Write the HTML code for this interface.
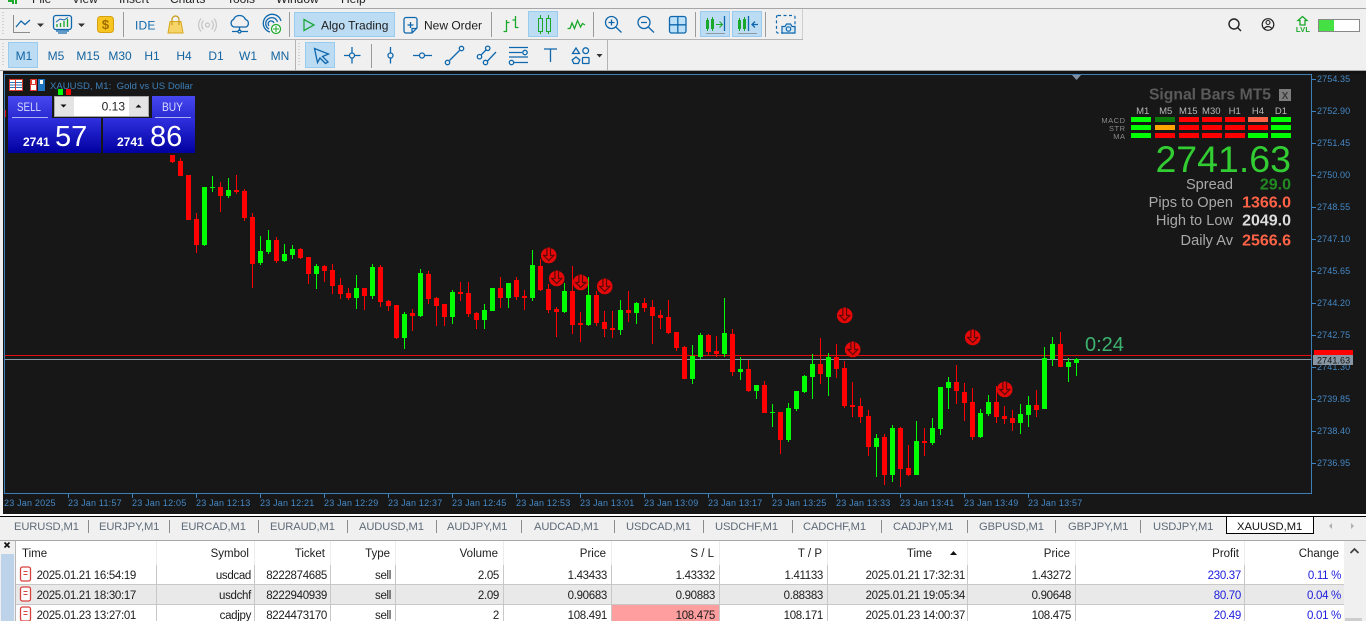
<!DOCTYPE html>
<html lang="en"><head><meta charset="utf-8"><title>MT5 XAUUSD</title>
<style>
html,body{margin:0;padding:0;width:1366px;height:621px;overflow:hidden;background:#f0f0f0}
svg{display:block;position:absolute;left:0;top:0;font-family:"Liberation Sans",sans-serif}
.c{shape-rendering:crispEdges}
.ax{font-size:9px;fill:#4488c6;letter-spacing:.1px}
.tm{font-size:9px;fill:#4488c6;letter-spacing:.2px}
.tb{font-size:12px;fill:#1464a0;text-anchor:middle}
.tab{font-size:11.2px;fill:#5f6b78;letter-spacing:-.12px}
.t{font-size:11.5px;fill:#1c1c1c;text-anchor:end;letter-spacing:-.32px}
.h{font-size:11.5px;fill:#1c1c1c;text-anchor:end}
.b{font-size:11.5px;fill:#1c1cdc;text-anchor:end;letter-spacing:-.3px}
.i{fill:none;stroke:#0f68ad;stroke-width:1.3}
.g{fill:none;stroke:#1aa82a;stroke-width:1.3}
.lb{font-size:14.6px;fill:#a9a9a9;text-anchor:end}
.v{font-size:16px;font-weight:bold;text-anchor:end}
</style></head><body>
<svg width="1366" height="621" viewBox="0 0 1366 621" xmlns="http://www.w3.org/2000/svg">
<defs>
<g id="mk"><circle r="7.8" fill="#e40808"/><path d="M-1.8-8V0H-5L0 5 5 0H1.8V-8" fill="none" stroke="#5a0808" stroke-width="1.2"/><path d="M-1-8V.8H-3L0 3.6 3 .8H1V-8Z" fill="#e40808"/></g>
<g id="ri"><rect x="20.5" y="-7.5" width="10" height="14" rx="2" fill="#fff" stroke="#d8403c" stroke-width="1.3"/><path d="M23.500 -3H27.500M23.500 0H27.500" stroke="#d8403c"/></g>
</defs>
<!-- chrome -->
<rect width="1366" height="621" fill="#f0f0f0"/>
<g font-size="12" fill="#222"><text x="32" y="3">File</text><text x="72" y="3">View</text><text x="119" y="3">Insert</text><text x="170" y="3">Charts</text><text x="227" y="3">Tools</text><text x="276" y="3">Window</text><text x="341" y="3">Help</text></g>
<path d="M8 0V2H12V4H14V0ZM15 0V4H17V0Z" fill="#1faa2e"/>
<g class="c">
<rect y="8" width="1366" height="1" fill="#a6a6a6"/>
<rect y="39" width="803" height="1" fill="#b4b4b4"/><rect x="802" y="9" width="1" height="30" fill="#cfcfcf"/>
<rect x="607" y="40" width="1" height="30" fill="#b4b4b4"/>
<rect y="70" width="1366" height="1" fill="#a8a8a8"/>
<rect x="123" y="12" width="1" height="25" fill="#9a9a9a"/><rect x="289" y="12" width="1" height="25" fill="#9a9a9a"/><rect x="491" y="12" width="1" height="25" fill="#9a9a9a"/><rect x="593" y="12" width="1" height="25" fill="#9a9a9a"/><rect x="695" y="12" width="1" height="25" fill="#9a9a9a"/><rect x="765" y="12" width="1" height="25" fill="#9a9a9a"/>
<rect x="295" y="40" width="1" height="30" fill="#b4b4b4"/><rect x="371" y="44" width="1" height="24" fill="#9a9a9a"/>
<path d="M3 12v1M3 15v1M3 18v1M3 21v1M3 24v1M3 27v1M3 30v1M3 33v1M3 43v1M3 46v1M3 49v1M3 52v1M3 55v1M3 58v1M3 61v1M3 64v1M299 43v1M299 46v1M299 49v1M299 52v1M299 55v1M299 58v1M299 61v1M299 64v1" stroke="#b5b5b5"/>
<!-- active buttons -->
<rect x="294.5" y="12.5" width="100" height="24" fill="#bcdcf4" stroke="#98cbee"/>
<rect x="528.5" y="11.5" width="29" height="25" fill="#bcdcf4" stroke="#98cbee"/>
<rect x="700.5" y="11.5" width="29" height="25" fill="#bcdcf4" stroke="#98cbee"/>
<rect x="732.5" y="11.5" width="29" height="25" fill="#bcdcf4" stroke="#98cbee"/>
<rect x="8.5" y="42.5" width="29" height="25" fill="#bcdcf4" stroke="#98cbee"/>
<rect x="305.5" y="42.5" width="29" height="25" fill="#bcdcf4" stroke="#98cbee"/>
</g>
<!-- toolbar 1 icons -->
<path d="M13.5 15V32.5H30" fill="none" stroke="#8c8c8c"/><path d="M16 27L21 21L25 24.5L30 20" class="i"/>
<path d="M37 23.5H44L40.500 27Z" fill="#333"/>
<rect x="53.500" y="15.500" width="18" height="14" rx="2.500" class="i"/><path d="M56 31H69M58 33H67" class="i"/><path d="M57 27v-3M60.500 27v-4M64 27v-6M67.500 27v-8" class="g"/><path d="M56 22L60 19L64 20L68 17.500" class="i" style="stroke-width:1"/>
<path d="M78 23.500H85L81.500 27Z" fill="#333"/>
<rect x="97.500" y="16.500" width="16" height="16" rx="3" fill="#f6c520" stroke="#d6a010"/><text x="105.500" y="29" text-anchor="middle" font-size="13" font-weight="bold" fill="#a06c00">$</text>
<text x="135" y="29.500" font-size="12" fill="#0f68ad" letter-spacing=".2">IDE</text>
<path d="M170 21.500H181L183 33H168Z" fill="#f6d468" stroke="#d8a820"/><path d="M172 25V19.500A3.500 3.500 0 0 1 179 19.500V25" fill="none" stroke="#c89a18" stroke-width="1.2"/>
<g fill="none" stroke="#c4c4c4" stroke-width="1.2"><circle cx="207.500" cy="25" r="2"/><path d="M203.500 20.500A6.500 6.500 0 0 0 203.500 29.500M211.500 20.500A6.500 6.500 0 0 1 211.500 29.500M201 18.500A10 10 0 0 0 201 31.500M214 18.500A10 10 0 0 1 214 31.500"/></g>
<path d="M236 27H234A4 4 0 0 1 233.500 19.500A6.500 6.500 0 0 1 245.500 19.500A4 4 0 0 1 246 27Z M239.500 27V31 M232 31.500H237.500M241.500 31.500H248" class="i"/><circle cx="239.500" cy="31.500" r="1.500" class="i"/>
<g class="i"><path d="M270 32A9 9 0 1 1 281 21" /><path d="M269 29A6 6 0 1 1 277.500 22"/><path d="M269 26A3 3 0 1 1 274 23"/></g>
<circle cx="276" cy="29" r="4.500" fill="#fff" stroke="#1aa82a" stroke-width="1.2"/><path d="M273 29H279M276 26V32" stroke="#1aa82a"/>
<path d="M304 19.500L314 25L304 30.500Z" fill="none" stroke="#1fa83c" stroke-width="1.3"/>
<text x="321" y="29.500" font-size="12" fill="#1c1c1c">Algo Trading</text>
<path d="M406 17.500H415A2 2 0 0 1 417 19.500V28L412 33H406A2 2 0 0 1 404 31V19.500A2 2 0 0 1 406 17.500ZM407.500 25H413.500M410.500 22V28M412 33V28.500H417" class="i"/>
<text x="424" y="29.500" font-size="12" fill="#1c1c1c">New Order</text>
<g class="g"><path d="M506.500 20V32M503.500 31.500H506.500M506.500 22.500H509.500M515.500 16V28M512.500 20H515.500M515.500 27.500H518.500"/></g>
<g class="g c" style="stroke-width:1"><rect x="538.500" y="18.500" width="4" height="13"/><path d="M540.500 15V18M540.500 32V34"/><rect x="546.500" y="18.500" width="4" height="13"/><path d="M548.500 15V18M548.500 32V34"/></g>
<path d="M567.500 28.500H570L572 23L574.500 28.500L577.500 20.500L580.500 27L582.500 23.500L585 25" class="g"/>
<g class="i"><circle cx="611.500" cy="22.500" r="6"/><path d="M615.800 27L621.500 32.500M608.500 22.500H614.500M611.500 19.500V25.500"/><circle cx="644" cy="22.500" r="6"/><path d="M648.300 27L654 32.500M641 22.500H647"/></g>
<rect x="669.500" y="16.500" width="16.500" height="16.500" rx="2" fill="#bbe0f7" stroke="#0f68ad" stroke-width="1.3"/><path d="M677.800 16.500V33M669.500 24.800H686" stroke="#0f68ad" stroke-width="1.3"/>
<g class="g c" style="stroke-width:1"><rect x="706.500" y="20.500" width="2" height="8"/><rect x="711.500" y="19.500" width="2" height="9"/><path d="M707.500 18V31M712.500 17V31M716 24.500H722"/></g><path d="M719.500 21.500L722.500 24.500 719.500 27.500" class="g" style="stroke-width:1"/><path d="M724.500 16V31" class="i"/><path d="M706 33.500H725" stroke="#8f9aa3"/>
<g class="g c" style="stroke-width:1"><rect x="738.500" y="20.500" width="2" height="8"/><rect x="743.500" y="19.500" width="2" height="9"/><path d="M739.500 18V31M744.500 17V31"/></g><path d="M748.500 16V31M758 24.500H752M755 21.500L752 24.500 755 27.500" class="i"/><path d="M738 33.500H757" stroke="#8f9aa3"/>
<rect x="776.500" y="15.500" width="18.500" height="17.500" rx="1.500" fill="none" stroke="#0f68ad" stroke-width="1.2" stroke-dasharray="3 2.500"/>
<path d="M782 33V26.500H785L786.500 24H790.500L792 26.500H795V33Z" fill="#d4e7f5" stroke="#0f68ad" stroke-width="1.2"/><circle cx="788.500" cy="29" r="2.200" fill="none" stroke="#0f68ad" stroke-width="1.2"/>
<!-- right side -->
<g fill="none" stroke="#222" stroke-width="1.400"><circle cx="1234" cy="24" r="5"/><path d="M1237.500 27.500L1241 31"/><circle cx="1268" cy="24.500" r="5.800" stroke-width="1.200"/><circle cx="1268" cy="22.500" r="2" stroke-width="1.100"/><path d="M1264 28.500Q1268 24.500 1272 28.500" stroke-width="1.100"/></g>
<path d="M1302.500 16.500L1307 20.500H1305V25H1300V20.500H1298Z" fill="none" stroke="#1aa82a" stroke-width="1.300"/>
<text x="1303" y="32" text-anchor="middle" font-size="7.500" font-weight="bold" fill="#1aa82a" letter-spacing=".2">LVL</text>
<g class="c"><rect x="1318.500" y="19.500" width="41" height="12" fill="#fff" stroke="#888"/><rect x="1319" y="20" width="15" height="11" fill="#44e044"/></g>
<!-- toolbar 2 -->
<text class="tb" x="24" y="60">M1</text><text class="tb" x="56" y="60">M5</text><text class="tb" x="88" y="60">M15</text><text class="tb" x="120" y="60">M30</text><text class="tb" x="152" y="60">H1</text><text class="tb" x="184" y="60">H4</text><text class="tb" x="216" y="60">D1</text><text class="tb" x="248" y="60">W1</text><text class="tb" x="280" y="60">MN</text>
<path d="M314.500 48.500L328.500 54L322.500 56.500L328 62L325.500 63.500L320 58L317.500 62.500Z" class="i"/>
<g class="i"><path d="M344 55.500H349.500M354.500 55.500H360.500M352 47V53M352 58V63.500"/><circle cx="352" cy="55.500" r="2.500"/>
<path d="M390.500 47V53M390.500 58V63.500"/><circle cx="390.500" cy="55.500" r="2.500"/>
<path d="M413 55.500H419.500M424.500 55.500H432"/><circle cx="422" cy="55.500" r="2.500"/>
<path d="M449.500 60.500L459.500 50.500"/><circle cx="447.500" cy="62.500" r="2.200"/><circle cx="461.500" cy="48.500" r="2.200"/>
<path d="M481 55L486 50M487.500 61L496 52"/><circle cx="479.500" cy="56.700" r="2.200"/><circle cx="487.700" cy="48.300" r="2.200"/><circle cx="485.500" cy="62.500" r="2.200"/>
<path d="M509 47.500H528M509 52.500H522M509 57H528M514 62.500H528"/><circle cx="525" cy="52.500" r="2.200"/><circle cx="511.500" cy="62.500" r="2.200"/>
<path d="M544 49H557M550.500 49V62"/>
<path d="M576 48L579.500 53.500H572.500Z"/><circle cx="585.700" cy="50.700" r="2.900"/><path d="M576 57L579.800 60L578.300 63.500H573.700L572.200 60Z"/><rect x="582.500" y="57.500" width="6.500" height="6" rx=".8"/></g>
<path d="M596.500 54H602.500L599.500 57.500Z" fill="#333"/>
<!-- chart -->
<rect class="c" x="3" y="71" width="1363" height="443" fill="#171717"/>
<rect class="c" x="3" y="71" width="1363" height="3" fill="#121212"/>
<rect class="c" x="4.500" y="74.500" width="1307" height="419" fill="none" stroke="#3f7fb8"/>
<path d="M1072 75H1081L1076.500 80Z" fill="#8090a0"/>
<path class="c" stroke="#3f83c0" fill="none" d="M1312 79.500h4M1312 111.500h4M1312 143.500h4M1312 175.500h4M1312 207.500h4M1312 239.500h4M1312 271.500h4M1312 303.500h4M1312 335.500h4M1312 367.500h4M1312 399.500h4M1312 431.500h4M1312 463.500h4M68.500 494v4M132.500 494v4M196.500 494v4M260.500 494v4M324.500 494v4M388.500 494v4M452.500 494v4M516.500 494v4M580.500 494v4M644.500 494v4M708.500 494v4M772.500 494v4M836.500 494v4M900.500 494v4M964.500 494v4M1028.500 494v4"/>
<g class="ax"><text x="1317" y="82">2754.35</text><text x="1317" y="114">2752.90</text><text x="1317" y="146">2751.45</text><text x="1317" y="178">2750.00</text><text x="1317" y="210">2748.55</text><text x="1317" y="242">2747.10</text><text x="1317" y="274">2745.65</text><text x="1317" y="306">2744.20</text><text x="1317" y="338">2742.75</text><text x="1317" y="370">2741.30</text><text x="1317" y="402">2739.85</text><text x="1317" y="434">2738.40</text><text x="1317" y="466">2736.95</text></g>
<g class="tm"><text x="4" y="506">23 Jan 2025</text><text x="68" y="506">23 Jan 11:57</text><text x="132" y="506">23 Jan 12:05</text><text x="196" y="506">23 Jan 12:13</text><text x="260" y="506">23 Jan 12:21</text><text x="324" y="506">23 Jan 12:29</text><text x="388" y="506">23 Jan 12:37</text><text x="452" y="506">23 Jan 12:45</text><text x="516" y="506">23 Jan 12:53</text><text x="580" y="506">23 Jan 13:01</text><text x="644" y="506">23 Jan 13:09</text><text x="708" y="506">23 Jan 13:17</text><text x="772" y="506">23 Jan 13:25</text><text x="836" y="506">23 Jan 13:33</text><text x="900" y="506">23 Jan 13:41</text><text x="964" y="506">23 Jan 13:49</text><text x="1028" y="506">23 Jan 13:57</text></g>
<!-- price lines -->
<g class="c"><rect x="5" y="355" width="1306" height="1" fill="#e01010"/><rect x="5" y="359" width="1306" height="1" fill="#8a98a6"/></g>
<!-- candles -->
<g class="c" fill="none">
<path stroke="#f00" stroke-width="1" d="M172.500 155V163M180.500 158V176M188.500 175V220M196.500 213V253M220.500 182V212M236.500 175V194M244.500 189V221M252.500 213V288M276.500 237V263M300.500 248V259M308.500 257V284M324.500 265V282M332.500 264V294M340.500 278V299M348.500 288V300M364.500 288V310M380.500 265V307M388.500 300V311M396.500 305V339M412.500 309V331M428.500 271V304M436.500 297V326M444.500 304V326M460.500 282V301M468.500 282V317M476.500 312V329M500.500 277V308M516.500 277V300M524.500 290V310M540.500 259V291M548.500 284V313M556.500 307V337M572.500 266V334M580.500 312V342M596.500 291V326M604.500 311V337M612.500 311V338M628.500 291V322M644.500 298V312M652.500 300V344M660.500 310V329M668.500 300V334M676.500 332V351M684.500 346V379M708.500 334V355M716.500 336V357M732.500 329V376M748.500 360V392M764.500 381V413M780.500 412V454M820.500 338V384M836.500 344V378M844.500 361V408M852.500 382V417M860.500 398V423M868.500 410V456M884.500 434V485M900.500 427V487M908.500 445V476M924.500 428V456M956.500 365V404M964.500 383V421M972.500 388V440M996.500 386V423M1004.500 406V424M1012.500 410V431M1036.500 390V417M1060.500 332V367"/>
<path stroke="#f00" stroke-width="5" d="M172.500 155V162M180.500 161V176M188.500 175V220M196.500 219V245M220.500 187V196M236.500 190V192M244.500 191V218M252.500 217V264M276.500 240V261M300.500 249V258M308.500 257V274M324.500 266V271M332.500 270V286M340.500 285V294M348.500 293V298M364.500 288V296M380.500 267V302M388.500 301V306M396.500 305V338M412.500 313V316M428.500 274V299M436.500 298V306M444.500 304V317M460.500 292V294M468.500 293V314M476.500 313V320M500.500 288V298M516.500 280V297M524.500 296V298M540.500 266V290M548.500 289V310M556.500 309V312M572.500 291V325M580.500 323V325M596.500 295V323M604.500 322V329M612.500 328V330M628.500 310V313M644.500 303V308M652.500 307V316M660.500 315V318M668.500 317V333M676.500 332V348M684.500 347V379M708.500 335V352M716.500 351V354M732.500 334V372M748.500 369V391M764.500 385V413M780.500 412V440M820.500 364V374M836.500 357V369M844.500 368V406M852.500 405V407M860.500 406V417M868.500 416V447M884.500 437V475M900.500 428V469M908.500 468V475M924.500 441V443M956.500 382V391M964.500 392V403M972.500 402V437M996.500 402V417M1004.500 416V419M1012.500 418V423M1036.500 405V410M1060.500 344V367"/>
<path stroke="#0f0" stroke-width="1" d="M204.500 187V246M212.500 176V192M228.500 178V198M260.500 236V265M268.500 230V254M284.500 244V262M292.500 245V259M316.500 264V289M356.500 275V309M372.500 264V299M404.500 312V349M420.500 269V317M452.500 290V324M484.500 304V329M492.500 288V311M508.500 283V308M532.500 250V301M564.500 283V313M588.500 277V326M620.500 300V335M636.500 302V324M692.500 345V384M700.500 333V359M724.500 298V357M740.500 357V380M756.500 385V399M772.500 404V427M788.500 403V442M796.500 391V411M804.500 375V393M812.500 354V399M828.500 353V396M876.500 434V477M892.500 425V482M916.500 421V475M932.500 418V445M940.500 387V435M948.500 377V409M980.500 409V438M988.500 395V416M1020.500 404V434M1028.500 396V427M1044.500 347V409M1052.500 337V366M1068.500 358V382M1076.500 358V376"/>
<path stroke="#0f0" stroke-width="5" d="M204.500 187V245M212.500 187V188M228.500 190V196M260.500 251V263M268.500 240V252M284.500 254V261M292.500 249V255M316.500 266V274M356.500 288V298M372.500 267V296M404.500 314V338M420.500 273V316M452.500 292V317M484.500 310V320M492.500 288V311M508.500 283V298M532.500 265V298M564.500 291V312M588.500 295V325M620.500 310V330M636.500 303V313M692.500 356V379M700.500 335V357M724.500 333V354M740.500 369V372M756.500 385V391M772.500 412V413M788.500 408V440M796.500 391V409M804.500 376V392M812.500 364V377M828.500 357V377M876.500 438V447M892.500 428V475M916.500 441V475M932.500 428V443M940.500 387V429M948.500 382V388M980.500 413V437M988.500 402V414M1020.500 414V423M1028.500 405V415M1044.500 358V409M1052.500 344V359M1068.500 362V367M1076.500 359V363"/>
<rect x="5" y="110" width="1" height="7" fill="#e00000"/>
<rect x="58" y="89" width="5" height="6" fill="#0f0"/><rect x="66" y="89" width="5" height="6" fill="#f00"/>
</g>
<!-- down markers -->
<use href="#mk" x="548.700" y="255.500"/><use href="#mk" x="556.700" y="278.500"/><use href="#mk" x="580.700" y="282.500"/><use href="#mk" x="604.700" y="286.500"/><use href="#mk" x="844.700" y="315.500"/><use href="#mk" x="852.700" y="349.500"/><use href="#mk" x="972.700" y="337.500"/><use href="#mk" x="1004.700" y="389.500"/>
<!-- price labels -->
<g class="c"><rect x="1314" y="350" width="39" height="6" fill="#f00"/><rect x="1313" y="355" width="40" height="10" fill="#8896a3"/></g>
<text x="1317" y="363.500" font-size="9" fill="#111" letter-spacing=".1">2741.63</text>
<text x="1085" y="351" font-size="20" fill="#3cb371">0:24</text>
<!-- chart title -->
<text x="50" y="89" font-size="9.500" fill="#3d7fb8" letter-spacing=".05" xml:space="preserve">XAUUSD, M1:  Gold vs US Dollar</text>
<g class="c"><rect x="9.500" y="79.500" width="13" height="11" fill="#fff" stroke="#d83a30"/><path d="M10 82.500H22M10 85H22M10 87.500H22" stroke="#2a72b8"/><path d="M15.500 80V90" stroke="#d83a30"/>
<rect x="30" y="79" width="7" height="12" fill="#e03a30"/><rect x="38" y="79" width="7" height="12" fill="#1f74c0"/><rect x="32" y="80" width="3" height="4" fill="#fff"/><rect x="40" y="80" width="3" height="4" fill="#fff"/><rect x="31" y="85" width="5" height="5" fill="#fff"/></g>
<!-- trade panel -->
<defs><linearGradient id="gu" x1="0" y1="0" x2="0" y2="1"><stop offset="0" stop-color="#4848f0"/><stop offset="1" stop-color="#2828d0"/></linearGradient><linearGradient id="gl" x1="0" y1="0" x2="0" y2="1"><stop offset="0" stop-color="#3030e0"/><stop offset="1" stop-color="#0000a0"/></linearGradient></defs>
<g class="c">
<rect x="8" y="96" width="44" height="24" fill="url(#gu)"/><rect x="152" y="96" width="43" height="24" fill="url(#gu)"/>
<rect x="8" y="118" width="93" height="35" fill="url(#gl)"/><rect x="103" y="118" width="92" height="35" fill="url(#gl)"/>
<rect x="12" y="117" width="36" height="1" fill="#aab0f0"/><rect x="155" y="117" width="36" height="1" fill="#aab0f0"/>
<rect x="54.500" y="96.500" width="94" height="20" fill="#e4e4e4" stroke="#a8a8a8"/><rect x="74" y="97" width="55" height="19" fill="#fff"/>
</g>
<path d="M60.500 104.500H66.500L63.500 107.500ZM135.500 107.500H141.500L138.500 104.500Z" fill="#111"/>
<text x="125" y="110.500" font-size="12" fill="#222" text-anchor="end">0.13</text>
<text x="17" y="111" font-size="12" fill="#d8dcff" textLength="24" lengthAdjust="spacingAndGlyphs">SELL</text>
<text x="162" y="111" font-size="12" fill="#d8dcff" textLength="21" lengthAdjust="spacingAndGlyphs">BUY</text>
<text x="23" y="146" font-size="12" font-weight="bold" fill="#fff">2741</text>
<text x="55" y="146" font-size="29" fill="#fff">57</text>
<text x="117" y="146" font-size="12" font-weight="bold" fill="#fff">2741</text>
<text x="150" y="146" font-size="29" fill="#fff">86</text>
<!-- signal panel -->
<text x="1271" y="99.500" font-size="15.700" font-weight="bold" fill="#5a5a5a" text-anchor="end">Signal Bars MT5</text>
<rect class="c" x="1279" y="89" width="12" height="12" fill="#7c7c7c"/><text x="1285" y="99" font-size="10" font-weight="bold" fill="#3a3a3a" text-anchor="middle">X</text>
<g font-size="9.500" fill="#b8b8b8" text-anchor="middle"><text x="1142.700" y="114">M1</text><text x="1165.700" y="114">M5</text><text x="1188.300" y="114">M15</text><text x="1211.300" y="114">M30</text><text x="1234.700" y="114">H1</text><text x="1258" y="114">H4</text><text x="1281" y="114">D1</text></g>
<g font-size="7.500" fill="#8a8a8a" text-anchor="end" letter-spacing=".5"><text x="1125.500" y="123">MACD</text><text x="1125.500" y="131">STR</text><text x="1125.500" y="139">MA</text></g>
<g class="c">
<rect x="1131" y="117" width="20" height="5" fill="#0f0"/><rect x="1155" y="117" width="20" height="5" fill="#0a7a0a"/><rect x="1179" y="117" width="20" height="5" fill="#f00"/><rect x="1202" y="117" width="20" height="5" fill="#f00"/><rect x="1225" y="117" width="20" height="5" fill="#f00"/><rect x="1248" y="117" width="20" height="5" fill="#ff6347"/><rect x="1271" y="117" width="20" height="5" fill="#0f0"/>
<rect x="1131" y="125" width="20" height="5" fill="#0f0"/><rect x="1155" y="125" width="20" height="5" fill="#ffa500"/><rect x="1179" y="125" width="20" height="5" fill="#f00"/><rect x="1202" y="125" width="20" height="5" fill="#f00"/><rect x="1225" y="125" width="20" height="5" fill="#f00"/><rect x="1248" y="125" width="20" height="5" fill="#f00"/><rect x="1271" y="125" width="20" height="5" fill="#0f0"/>
<rect x="1131" y="133" width="20" height="5" fill="#0f0"/><rect x="1155" y="133" width="20" height="5" fill="#f00"/><rect x="1179" y="133" width="20" height="5" fill="#f00"/><rect x="1202" y="133" width="20" height="5" fill="#f00"/><rect x="1225" y="133" width="20" height="5" fill="#f00"/><rect x="1248" y="133" width="20" height="5" fill="#0f0"/><rect x="1271" y="133" width="20" height="5" fill="#0f0"/>
</g>
<text x="1291" y="172" font-size="37.500" fill="#32cd32" text-anchor="end">2741.63</text>
<text class="lb" x="1233" y="189">Spread</text><text class="v" x="1291" y="189.500" fill="#228b22">29.0</text>
<text class="lb" x="1233" y="207">Pips to Open</text><text class="v" x="1291" y="207.500" fill="#ff6347">1366.0</text>
<text class="lb" x="1233" y="225">High to Low</text><text class="v" x="1291" y="225.500" fill="#dcdcdc">2049.0</text>
<text class="lb" x="1233" y="245">Daily Av</text><text class="v" x="1291" y="245.500" fill="#ff6347">2566.6</text>
<!-- tabs -->
<g class="c"><rect y="514" width="1366" height="2" fill="#fff"/><rect y="516" width="1366" height="1" fill="#000"/><rect y="517" width="1366" height="23" fill="#f0f0f0"/>
<path stroke="#8c8c8c" d="M88.500 520v13M169.500 520v13M258.500 520v13M347.500 520v13M436.500 520v13M521.500 520v13M614.500 520v13M703.500 520v13M792.500 520v13M881.500 520v13M967.500 520v13M1055.500 520v13M1140.500 520v13"/>
<rect x="1226.500" y="516.500" width="87" height="17" fill="#fff" stroke="#000"/></g>
<g class="tab"><text x="14" y="530">EURUSD,M1</text><text x="99" y="530">EURJPY,M1</text><text x="181" y="530">EURCAD,M1</text><text x="270" y="530">EURAUD,M1</text><text x="359" y="530">AUDUSD,M1</text><text x="447" y="530">AUDJPY,M1</text><text x="534" y="530">AUDCAD,M1</text><text x="626" y="530">USDCAD,M1</text><text x="715" y="530">USDCHF,M1</text><text x="803" y="530">CADCHF,M1</text><text x="893" y="530">CADJPY,M1</text><text x="979" y="530">GBPUSD,M1</text><text x="1068" y="530">GBPJPY,M1</text><text x="1153" y="530">USDJPY,M1</text></g>
<text x="1237" y="530" font-size="11.200" fill="#111">XAUUSD,M1</text>
<path d="M1332 523V529L1329 526ZM1351 523V529L1354 526Z" fill="#b0b0b0"/>
<!-- table -->
<g class="c">
<rect x="16" y="541" width="1328" height="80" fill="#fff"/>
<rect x="16" y="585" width="1328" height="20" fill="#e9e9e9"/>
<rect x="612" y="605" width="108" height="16" fill="#ff9e9e"/>
<rect y="540" width="1366" height="1" fill="#a8a8a8"/><rect x="15" y="541" width="1" height="80" fill="#b8b8b8"/>
<rect x="16" y="584" width="1328" height="1" fill="#c8c8c8"/><rect x="16" y="604" width="1328" height="1" fill="#c8c8c8"/>
<path stroke="#ececec" d="M156.500 541v24M254.500 541v24M330.500 541v24M395.500 541v24M503.500 541v24M611.500 541v24M719.500 541v24M827.500 541v24M967.500 541v24M1075.500 541v24M1244.500 541v24"/>
<path stroke="#c8c8c8" d="M156.500 565v56M254.500 565v56M330.500 565v56M395.500 565v56M503.500 565v56M611.500 565v56M719.500 565v56M827.500 565v56M967.500 565v56M1075.500 565v56M1244.500 565v56"/>
<rect x="1344" y="541" width="22" height="80" fill="#f0f0f0"/>
<rect x="1345" y="618" width="17" height="3" fill="#cdcdcd"/>
<rect x="1" y="554" width="13" height="67" fill="#bcd3ea"/>
</g>
<path d="M4.500 542.500L9.500 547.500M9.500 542.500L4.500 547.500" stroke="#111" stroke-width="1.700"/>
<path d="M1350.500 553L1354.500 549L1358.500 553" fill="none" stroke="#444" stroke-width="1.800"/>
<path d="M950 555L953.500 551L957 555Z" fill="#111"/>
<g class="h"><text x="22" y="557" style="text-anchor:start">Time</text><text x="249" y="557">Symbol</text><text x="325" y="557">Ticket</text><text x="390" y="557">Type</text><text x="498" y="557">Volume</text><text x="606" y="557">Price</text><text x="714" y="557">S / L</text><text x="822" y="557">T / P</text><text x="932" y="557">Time</text><text x="1070" y="557">Price</text><text x="1239" y="557">Profit</text><text x="1339" y="557">Change</text></g>
<use href="#ri" y="574.500"/><use href="#ri" y="594.500"/><use href="#ri" y="614.500"/>
<g class="t">
<text x="136" y="579">2025.01.21 16:54:19</text><text x="251" y="579">usdcad</text><text x="327" y="579">8222874685</text><text x="391" y="579">sell</text><text x="499" y="579">2.05</text><text x="607" y="579">1.43433</text><text x="715" y="579">1.43332</text><text x="823" y="579">1.41133</text><text x="965" y="579">2025.01.21 17:32:31</text><text x="1071" y="579">1.43272</text>
<text x="136" y="599">2025.01.21 18:30:17</text><text x="251" y="599">usdchf</text><text x="327" y="599">8222940939</text><text x="391" y="599">sell</text><text x="499" y="599">2.09</text><text x="607" y="599">0.90683</text><text x="715" y="599">0.90883</text><text x="823" y="599">0.88383</text><text x="965" y="599">2025.01.21 19:05:34</text><text x="1071" y="599">0.90648</text>
<text x="136" y="619">2025.01.23 13:27:01</text><text x="251" y="619">cadjpy</text><text x="327" y="619">8224473170</text><text x="391" y="619">sell</text><text x="499" y="619">2</text><text x="607" y="619">108.491</text><text x="715" y="619">108.475</text><text x="823" y="619">108.171</text><text x="965" y="619">2025.01.23 14:00:37</text><text x="1071" y="619">108.475</text>
</g>
<g class="b"><text x="1241" y="579">230.37</text><text x="1341" y="579">0.11 %</text><text x="1241" y="599">80.70</text><text x="1341" y="599">0.04 %</text><text x="1241" y="619">20.49</text><text x="1341" y="619">0.01 %</text></g>
</svg>
</body></html>
